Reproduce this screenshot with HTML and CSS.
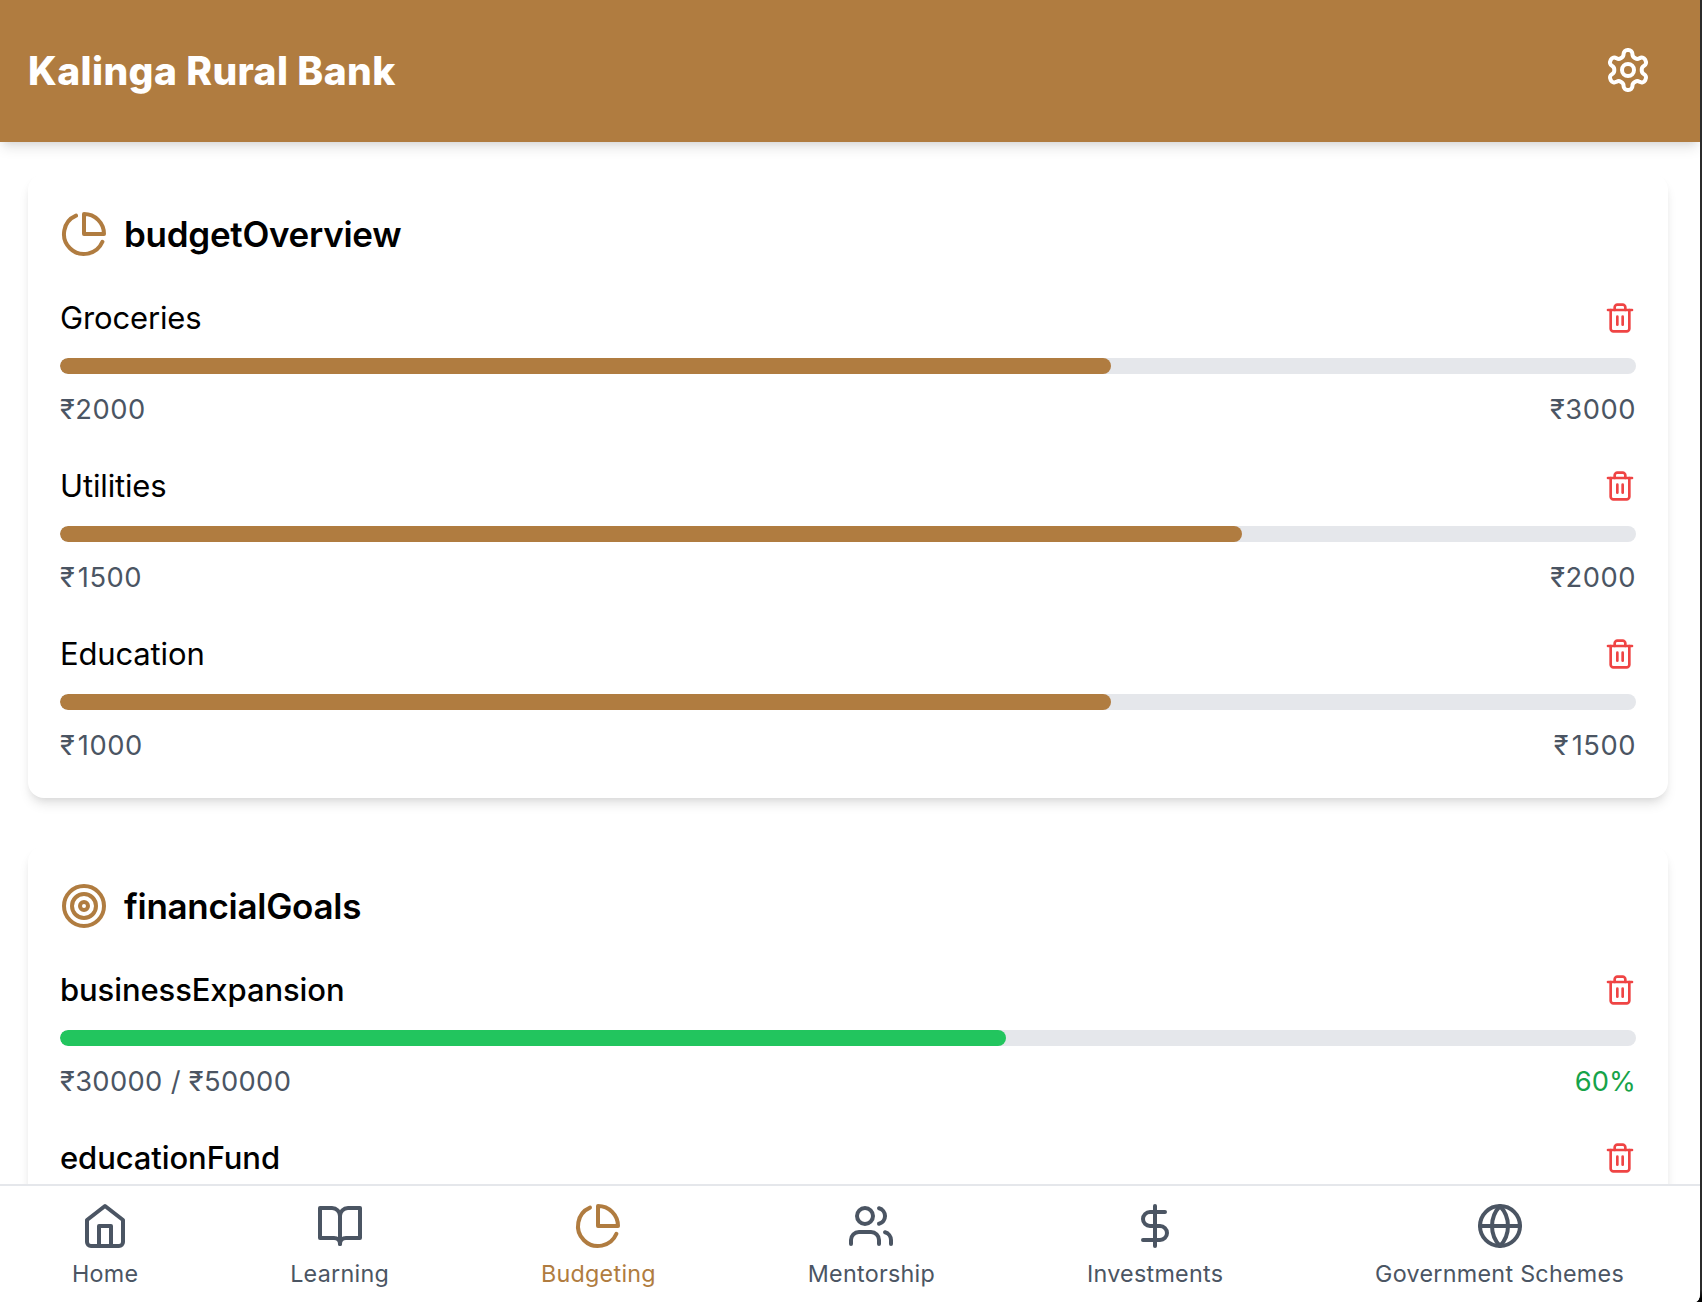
FILE: index.html
```html
<!DOCTYPE html>
<html lang="en">
<head>
<meta charset="utf-8">
<title>Kalinga Rural Bank</title>
<link rel="stylesheet" href="styles.css">
</head>
<body>
<svg class="sprite" aria-hidden="true">
  <symbol id="settings" viewBox="0 0 24 24"><path d="M12.22 2h-.44a2 2 0 0 0-2 2v.18a2 2 0 0 1-1 1.73l-.43.25a2 2 0 0 1-2 0l-.15-.08a2 2 0 0 0-2.73.73l-.22.38a2 2 0 0 0 .73 2.73l.15.1a2 2 0 0 1 1 1.72v.51a2 2 0 0 1-1 1.74l-.15.09a2 2 0 0 0-.73 2.73l.22.38a2 2 0 0 0 2.73.73l.15-.08a2 2 0 0 1 2 0l.43.25a2 2 0 0 1 1 1.73V20a2 2 0 0 0 2 2h.44a2 2 0 0 0 2-2v-.18a2 2 0 0 1 1-1.73l.43-.25a2 2 0 0 1 2 0l.15.08a2 2 0 0 0 2.73-.73l.22-.39a2 2 0 0 0-.73-2.73l-.15-.08a2 2 0 0 1-1-1.74v-.5a2 2 0 0 1 1-1.74l.15-.09a2 2 0 0 0 .73-2.73l-.22-.38a2 2 0 0 0-2.73-.73l-.15.08a2 2 0 0 1-2 0l-.43-.25a2 2 0 0 1-1-1.73V4a2 2 0 0 0-2-2z"/><circle cx="12" cy="12" r="3"/></symbol>
  <symbol id="pie" viewBox="0 0 24 24"><path d="M21.21 15.89A10 10 0 1 1 8 2.83"/><path d="M22 12A10 10 0 0 0 12 2v10z"/></symbol>
  <symbol id="target" viewBox="0 0 24 24"><circle cx="12" cy="12" r="10"/><circle cx="12" cy="12" r="6"/><circle cx="12" cy="12" r="2"/></symbol>
  <symbol id="trash" viewBox="0 0 24 24"><path d="M3 6h18"/><path d="M19 6v14c0 1-1 2-2 2H7c-1 0-2-1-2-2V6"/><path d="M8 6V4c0-1 1-2 2-2h4c1 0 2 1 2 2v2"/><path d="M10 11v6"/><path d="M14 11v6"/></symbol>
  <symbol id="home" viewBox="0 0 24 24"><path d="m3 9 9-7 9 7v11a2 2 0 0 1-2 2H5a2 2 0 0 1-2-2z"/><path d="M9 22V12h6v10"/></symbol>
  <symbol id="book" viewBox="0 0 24 24"><path d="M2 3h6a4 4 0 0 1 4 4v14a3 3 0 0 0-3-3H2z"/><path d="M22 3h-6a4 4 0 0 0-4 4v14a3 3 0 0 1 3-3h7z"/></symbol>
  <symbol id="users" viewBox="0 0 24 24"><path d="M16 21v-2a4 4 0 0 0-4-4H6a4 4 0 0 0-4 4v2"/><circle cx="9" cy="7" r="4"/><path d="M22 21v-2a4 4 0 0 0-3-3.87"/><path d="M16 3.13a4 4 0 0 1 0 7.75"/></symbol>
  <symbol id="dollar" viewBox="0 0 24 24"><path d="M12 2v20"/><path d="M17 5H9.5a3.5 3.5 0 0 0 0 7h5a3.5 3.5 0 0 1 0 7H6"/></symbol>
  <symbol id="globe" viewBox="0 0 24 24"><circle cx="12" cy="12" r="10"/><path d="M12 2a14.5 14.5 0 0 0 0 20 14.5 14.5 0 0 0 0-20"/><path d="M2 12h20"/></symbol>
</svg>
<div class="app">
  <header class="header">
    <h1 class="brand">Kalinga Rural Bank</h1>
    <button class="icon-button" aria-label="Settings"><svg class="icon"><use href="#settings"/></svg></button>
  </header>
  <main class="content">
    <section class="card">
      <h2 class="card-title"><svg class="icon"><use href="#pie"/></svg><span>budgetOverview</span></h2>
      <div class="list">
        <div class="item">
          <div class="row"><span class="name">Groceries</span><svg class="icon trash"><use href="#trash"/></svg></div>
          <div class="bar"><div class="fill" style="width:66.667%"></div></div>
          <div class="row amounts"><span>₹2000</span><span>₹3000</span></div>
        </div>
        <div class="item">
          <div class="row"><span class="name">Utilities</span><svg class="icon trash"><use href="#trash"/></svg></div>
          <div class="bar"><div class="fill" style="width:75%"></div></div>
          <div class="row amounts"><span><span class="wide">₹</span>1500</span><span>₹2000</span></div>
        </div>
        <div class="item">
          <div class="row"><span class="name">Education</span><svg class="icon trash"><use href="#trash"/></svg></div>
          <div class="bar"><div class="fill" style="width:66.667%"></div></div>
          <div class="row amounts"><span><span class="wide">₹</span>1000</span><span><span class="wide">₹</span>1500</span></div>
        </div>
      </div>
    </section>
    <section class="card">
      <h2 class="card-title"><svg class="icon"><use href="#target"/></svg><span>financialGoals</span></h2>
      <div class="list">
        <div class="item">
          <div class="row"><span class="name goal">businessExpansion</span><svg class="icon trash"><use href="#trash"/></svg></div>
          <div class="bar"><div class="fill green" style="width:60%"></div></div>
          <div class="row amounts goal-amounts"><span>₹30000 / ₹50000</span><span class="percent">60%</span></div>
        </div>
        <div class="item">
          <div class="row"><span class="name goal">educationFund</span><svg class="icon trash"><use href="#trash"/></svg></div>
        </div>
      </div>
    </section>
  </main>
  <nav class="nav">
    <a class="tab"><svg class="icon"><use href="#home"/></svg><span>Home</span></a>
    <a class="tab"><svg class="icon"><use href="#book"/></svg><span>Learning</span></a>
    <a class="tab active"><svg class="icon"><use href="#pie"/></svg><span>Budgeting</span></a>
    <a class="tab"><svg class="icon"><use href="#users"/></svg><span>Mentorship</span></a>
    <a class="tab"><svg class="icon"><use href="#dollar"/></svg><span>Investments</span></a>
    <a class="tab"><svg class="icon"><use href="#globe"/></svg><span>Government Schemes</span></a>
  </nav>
</div>
</body>
</html>
```
FILE: styles.css
```css
* { box-sizing: border-box; }
body { margin: 0; background: linear-gradient(#2b2b2b 1290px, #000 1298px); font-family: Inter, "Noto Sans", sans-serif; font-weight: 430; color: #000; height: 1302px; overflow: hidden; }
h1, h2 { margin: 0; }
.sprite { display: none; }
.icon { display: block; flex: none; width: 48px; height: 48px; fill: none; stroke: currentColor; stroke-width: 2; stroke-linecap: round; stroke-linejoin: round; }

.app { width: 1700px; height: 1302px; display: flex; flex-direction: column; overflow: hidden; background: #fff; border-bottom-right-radius: 5px 8px; }

.header { flex: none; height: 142px; padding: 0 32px 2px 28px; display: flex; align-items: center; justify-content: space-between; background: #b07c40; color: #fff; box-shadow: 0 8px 12px -2px rgba(0,0,0,.1), 0 4px 8px -4px rgba(0,0,0,.1); }
.brand { font-size: 39px; font-weight: 800; letter-spacing: .4px; line-height: 56px; padding-top: 1px; }
.icon-button { border: 0; padding: 16px; background: none; color: inherit; }

.content { flex: 1; min-height: 0; overflow: hidden; padding: 32px 32px 0 28px; display: flex; flex-direction: column; gap: 48px; }
.card { flex: none; padding: 32px; border-radius: 16px; background: #fff; box-shadow: 0 8px 12px -2px rgba(0,0,0,.1), 0 4px 8px -4px rgba(0,0,0,.1); }
.card-title { display: flex; align-items: center; gap: 16px; height: 56px; margin-bottom: 32px; font-size: 35px; font-weight: 630; letter-spacing: -.28px; }
.card-title .icon { color: #b07c40; }
.list { display: flex; flex-direction: column; gap: 32px; }
.row { display: flex; align-items: center; justify-content: space-between; }
.name { font-size: 31px; line-height: 48px; letter-spacing: -.15px; }
.goal { font-weight: 520; letter-spacing: -.1px; }
.trash { width: 32px; height: 32px; color: #ef4444; }
.bar { height: 16px; margin: 16px 0; border-radius: 8px; background: #e5e7eb; overflow: hidden; }
.fill { height: 100%; border-radius: 8px; background: #b07c40; }
.fill.green { background: #22c55e; }
.amounts { font-size: 27.3px; line-height: 40px; letter-spacing: .55px; color: #4b5563; }
.wide { letter-spacing: 3px; }
.goal-amounts { letter-spacing: .35px; }
.percent { color: #16a34a; letter-spacing: .1px; }

.nav { flex: none; height: 118px; margin-left: -4px; padding: 16px 0 12px; display: flex; justify-content: space-around; border-top: 2px solid #e5e7eb; background: #fff; color: #4b5563; }
.tab { display: flex; flex-direction: column; align-items: center; gap: 8px; font-size: 23.3px; line-height: 32px; letter-spacing: .28px; }
.active { color: #b07c40; }
```
